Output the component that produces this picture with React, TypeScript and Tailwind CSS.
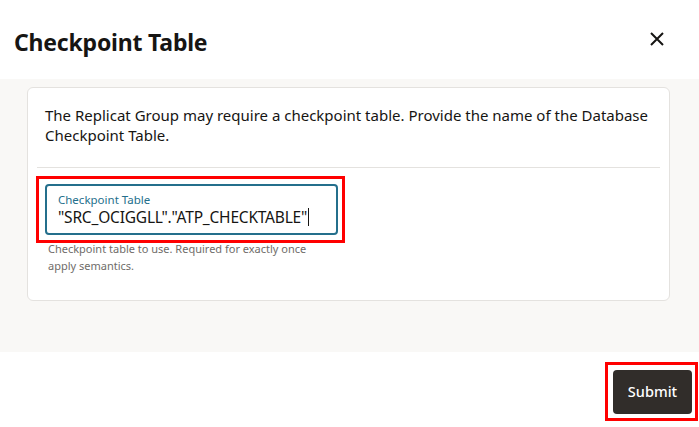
import React from 'react';

const FONT = { fontFamily: '"Noto Sans", "Open Sans", sans-serif' };

const CloseIcon = () => (
  <svg width="14" height="14" viewBox="0 0 14 14" fill="none" stroke="#161513" strokeWidth={2}>
    <path d="M1 1l12 12M13 1L1 13" />
  </svg>
);

export default function App() {
  return (
    <div className="w-[699px] h-[427px] flex flex-col bg-white text-[#161513]" style={FONT}>
      {/* header */}
      <div className="h-[79px] flex items-center justify-between pl-[14px] pr-[30px] pt-[6px]">
        <h1 className="text-[23px] font-bold tracking-[-0.2px]">Checkpoint Table</h1>
        <button className="w-6 h-6 flex items-center justify-center -mt-[8px]" aria-label="close">
          <CloseIcon />
        </button>
      </div>

      {/* body */}
      <div className="h-[273px] bg-[#f9f8f6] pt-[8px] pl-[27px] pr-[29px]">
        <div className="h-[214px] bg-white border border-[#e4e2df] rounded-[6px] px-[9px] pt-[17px]">
          <p className="px-[8px] text-[15px] leading-[20px] text-[#161513]">
            The Replicat Group may require a checkpoint table. Provide the name of the Database Checkpoint Table.
          </p>
          <div className="mt-[22px] border-t border-[#e4e2df]" />
          <div className="pt-[16px] px-[8px]">
            <div className="relative w-[293px]">
              <div className="h-[51px] border-2 border-[#246f8c] rounded-[4px] pl-[11px] pt-[6px]">
                <div className="text-[11.5px] leading-[15px] text-[#246f8c]">Checkpoint Table</div>
                <div className="flex items-center text-[15.5px] leading-[20px] text-[#161513] tracking-[-0.2px]">
                  <span>"SRC_OCIGGLL"."ATP_CHECKTABLE"</span>
                  <span className="ml-[1px] w-px h-[18px] bg-[#161513]" />
                </div>
              </div>
              <div className="absolute -left-[9px] -right-[7px] -top-[8px] -bottom-[8px] border-[3px] border-[#ff0000] pointer-events-none" />
            </div>
            <p className="mt-[5px] pl-[3px] w-[290px] text-[11px] leading-[17px] text-[#6f6c69]">
              Checkpoint table to use. Required for exactly once apply semantics.
            </p>
          </div>
        </div>
      </div>

      {/* footer */}
      <div className="flex-1 flex justify-end items-start pt-[18px] pr-[7px]">
        <div className="relative">
          <button className="w-[79px] h-[44px] rounded-[4px] bg-[#312d2a] text-white text-[14.5px] font-medium">
            Submit
          </button>
          <div className="absolute -left-[8px] -right-[6px] -top-[8px] -bottom-[7px] border-[3px] border-[#ff0000] pointer-events-none" />
        </div>
      </div>
    </div>
  );
}
